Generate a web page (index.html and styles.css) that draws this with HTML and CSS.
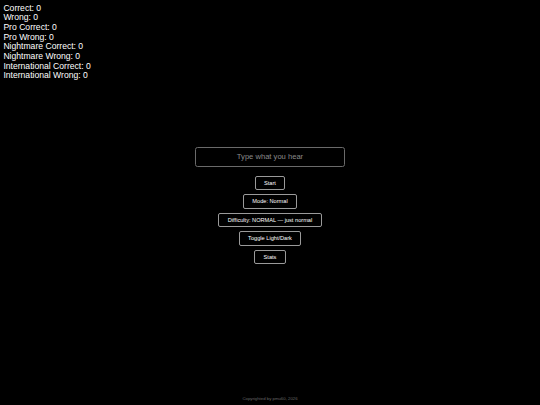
FILE: index.html
```html
<!DOCTYPE html>
<html lang="en">
<head>
<meta charset="utf-8">
<title>Listening Game</title>
<link rel="stylesheet" href="styles.css">
</head>
<body>
<div class="stats">
  <div>Correct: 0</div>
  <div>Wrong: 0</div>
  <div>Pro Correct: 0</div>
  <div>Pro Wrong: 0</div>
  <div>Nightmare Correct: 0</div>
  <div>Nightmare Wrong: 0</div>
  <div>International Correct: 0</div>
  <div>International Wrong: 0</div>
</div>
<main class="main">
  <input class="answer" type="text" placeholder="Type what you hear">
  <div class="buttons">
    <button class="btn">Start</button>
    <button class="btn">Mode: Normal</button>
    <button class="btn">Difficulty: NORMAL — just normal</button>
    <button class="btn">Toggle Light/Dark</button>
    <button class="btn">Stats</button>
  </div>
</main>
<footer class="footer">Copyrighted by pmu60, 2026</footer>
</body>
</html>
```

FILE: styles.css
```css
html, body {
  height: 100%;
}
body {
  margin: 0;
  background: #000;
  color: #fff;
  font-family: "Liberation Sans", Arial, sans-serif;
  display: grid;
  grid-template: 1fr / 1fr;
  height: 100vh;
}
.stats {
  grid-area: 1 / 1;
  align-self: start;
  justify-self: start;
  padding: 3.8px 3.4px;
  font-size: 8.6px;
  line-height: 9.65px;
}
.main {
  grid-area: 1 / 1;
  align-self: center;
  justify-self: center;
  display: flex;
  flex-direction: column;
  align-items: center;
  margin-top: 6px;
}
.answer {
  box-sizing: border-box;
  width: 150px;
  height: 20px;
  background: #000;
  color: #fff;
  border: 1px solid #6a6a6a;
  border-radius: 2.5px;
  font-family: "Liberation Sans", Arial, sans-serif;
  font-size: 7.6px;
  text-align: center;
  padding: 0 4px;
  margin: 0 0 9px;
  outline: none;
}
.answer::placeholder {
  color: #8a8a8a;
}
.buttons {
  display: flex;
  flex-direction: column;
  align-items: center;
  gap: 4px;
}
.btn {
  background: #000;
  color: #fff;
  border: 1px solid #9a9a9a;
  border-radius: 2px;
  font-family: "Liberation Sans", Arial, sans-serif;
  font-size: 5.63px;
  line-height: 6.5px;
  padding: 3px 8.4px;
  margin: 0;
}
.footer {
  grid-area: 1 / 1;
  align-self: end;
  justify-self: center;
  font-size: 4.3px;
  line-height: 5px;
  color: #666;
  padding-bottom: 4.5px;
}
```
